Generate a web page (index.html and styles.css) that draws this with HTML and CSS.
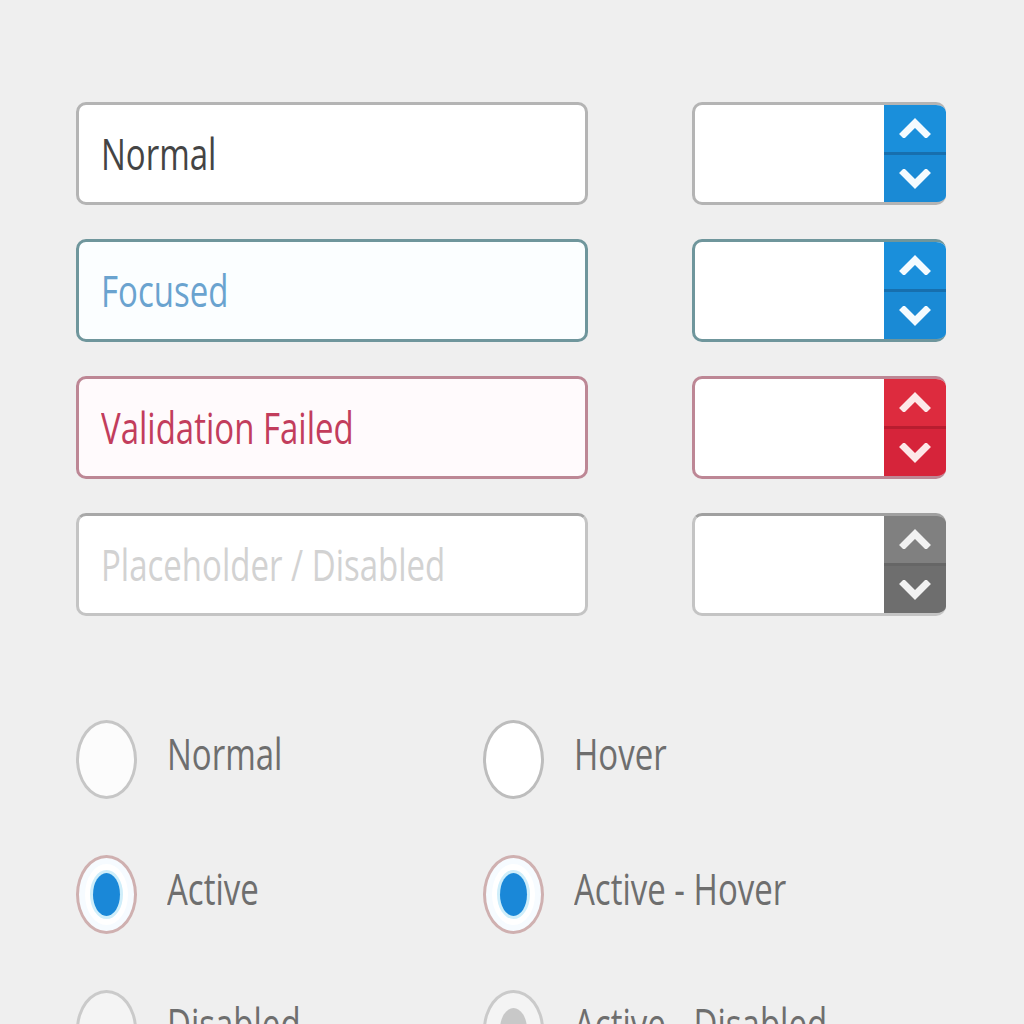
FILE: index.html
```html
<!DOCTYPE html>
<html>
<head>
<meta charset="utf-8">
<link rel="stylesheet" href="styles.css">
</head>
<body>
<div class="page">
  <div class="fields">
    <div class="row">
      <div class="text-input normal"><span class="txt">Normal</span></div>
      <div class="num-input normal">
        <div class="num-field"></div>
        <div class="spin blue">
          <div class="spin-btn"><svg viewBox="0 0 32 22"><path d="M5 18 L16 7 L27 18" /></svg></div>
          <div class="spin-btn"><svg viewBox="0 0 32 22"><path d="M5 4 L16 15 L27 4" /></svg></div>
        </div>
      </div>
    </div>
    <div class="row">
      <div class="text-input focused"><span class="txt">Focused</span></div>
      <div class="num-input focused">
        <div class="num-field"></div>
        <div class="spin blue">
          <div class="spin-btn"><svg viewBox="0 0 32 22"><path d="M5 18 L16 7 L27 18" /></svg></div>
          <div class="spin-btn"><svg viewBox="0 0 32 22"><path d="M5 4 L16 15 L27 4" /></svg></div>
        </div>
      </div>
    </div>
    <div class="row">
      <div class="text-input error"><span class="txt">Validation Failed</span></div>
      <div class="num-input error">
        <div class="num-field"></div>
        <div class="spin red">
          <div class="spin-btn"><svg viewBox="0 0 32 22"><path d="M5 18 L16 7 L27 18" /></svg></div>
          <div class="spin-btn"><svg viewBox="0 0 32 22"><path d="M5 4 L16 15 L27 4" /></svg></div>
        </div>
      </div>
    </div>
    <div class="row">
      <div class="text-input disabled"><span class="txt">Placeholder / Disabled</span></div>
      <div class="num-input disabled">
        <div class="num-field"></div>
        <div class="spin gray">
          <div class="spin-btn"><svg viewBox="0 0 32 22"><path d="M5 18 L16 7 L27 18" /></svg></div>
          <div class="spin-btn"><svg viewBox="0 0 32 22"><path d="M5 4 L16 15 L27 4" /></svg></div>
        </div>
      </div>
    </div>
  </div>

  <div class="radios">
    <div class="radio"><span class="circle"></span><span class="txt label">Normal</span></div>
    <div class="radio"><span class="circle hover"></span><span class="txt label">Hover</span></div>
    <div class="radio"><span class="circle active"><span class="dot"></span></span><span class="txt label">Active</span></div>
    <div class="radio"><span class="circle active"><span class="dot"></span></span><span class="txt label">Active - Hover</span></div>
    <div class="radio"><span class="circle dis"></span><span class="txt label">Disabled</span></div>
    <div class="radio"><span class="circle dis"><span class="dot gray-dot"></span></span><span class="txt label">Active - Disabled</span></div>
  </div>
</div>
</body>
</html>
```

FILE: styles.css
```css
html, body {
  margin: 0;
  padding: 0;
  background: #efefef;
  overflow: hidden;
  height: 1024px;
}
body {
  font-family: "Open Sans", "Liberation Sans", sans-serif;
}
.page {
  padding: 102px 0 0 76px;
}
.fields {
  display: flex;
  flex-direction: column;
  gap: 34px;
}
.row {
  display: flex;
  gap: 104px;
}
.txt {
  display: inline-block;
  font-size: 33px;
  line-height: 34px;
  transform: scaleY(1.32);
  transform-origin: center;
  white-space: nowrap;
}
.text-input {
  box-sizing: border-box;
  width: 512px;
  height: 103px;
  background: #fff;
  border: 3px solid #b4b4b4;
  border-radius: 10px;
  display: flex;
  align-items: center;
  padding-left: 22px;
}
.text-input.normal .txt { color: #444; }
.text-input.focused { border-color: #6f969c; background: #fbfeff; }
.text-input.focused .txt { color: #6aa3cf; }
.text-input.error { border-color: #bd8795; background: #fffafc; }
.text-input.error .txt { color: #c23d5c; }
.text-input.disabled { border-color: #c4c4c4; border-top-color: #a8a8a8; }
.text-input.disabled .txt { color: #d2d2d2; }

.num-input {
  box-sizing: border-box;
  width: 254px;
  height: 103px;
  display: flex;
  border: 3px solid #b4b4b4;
  border-right: none;
  border-radius: 10px;
  overflow: hidden;
  background: #fff;
}
.num-input.focused { border-color: #6f969c; }
.num-input.error { border-color: #bd8795; }
.num-input.disabled { border-color: #c4c4c4; border-top-color: #a0a0a0; }
.num-field {
  flex: 1;
}
.spin {
  width: 62px;
  margin: -3px 0;
  display: flex;
  flex-direction: column;
}
.spin-btn {
  flex: 1;
  display: flex;
  align-items: center;
  justify-content: center;
}
.spin-btn svg {
  width: 32px;
  height: 22px;
}
.spin-btn path {
  fill: none;
  stroke: #f4fbff;
  stroke-width: 7;
  stroke-linecap: square;
  stroke-linejoin: miter;
}
.spin.blue { background: #1a8fdb; }
.spin.blue .spin-btn:first-child { border-bottom: 3px solid #176fae; }
.spin.blue .spin-btn:last-child { background: #1a8ad5; }
.spin.red { background: #dd2b3e; }
.spin.red .spin-btn:first-child { border-bottom: 3px solid #b81d2f; }
.spin.red .spin-btn:last-child { background: #d6243a; }
.spin.red path { stroke: #fde8e8; }
.spin.gray { background: #7b7b7b; }
.spin.gray .spin-btn:first-child { border-bottom: 3px solid #666; background: #808080; }
.spin.gray .spin-btn:last-child { background: #6e6e6e; }
.spin.gray path { stroke: #f2f2f2; }

.radios {
  margin-top: 104px;
  display: grid;
  grid-template-columns: 407px auto;
  row-gap: 56px;
}
.radio {
  display: flex;
  align-items: center;
  gap: 30px;
}
.circle {
  box-sizing: border-box;
  width: 61px;
  height: 79px;
  border-radius: 50%;
  border: 3px solid #c6c6c6;
  background: #fcfcfc;
  display: flex;
  align-items: center;
  justify-content: center;
  flex: none;
}
.circle.hover { border-color: #bdbdbd; background: #fff; }
.circle.active {
  border-color: #cfb0b0;
  background: #fff;
  box-shadow: inset 0 0 0 6px #f6fbff;
}
.circle.dis { border-color: #cacaca; background: #f4f4f4; }
.dot {
  width: 27px;
  height: 43px;
  border-radius: 50%;
  background: #1a88d8;
  box-shadow: 0 0 0 3px #cfeefa;
}
.dot.gray-dot {
  background: #c8c8c8;
  box-shadow: none;
}
.label {
  color: #6e6e6e;
  margin-bottom: 12px;
}
```
